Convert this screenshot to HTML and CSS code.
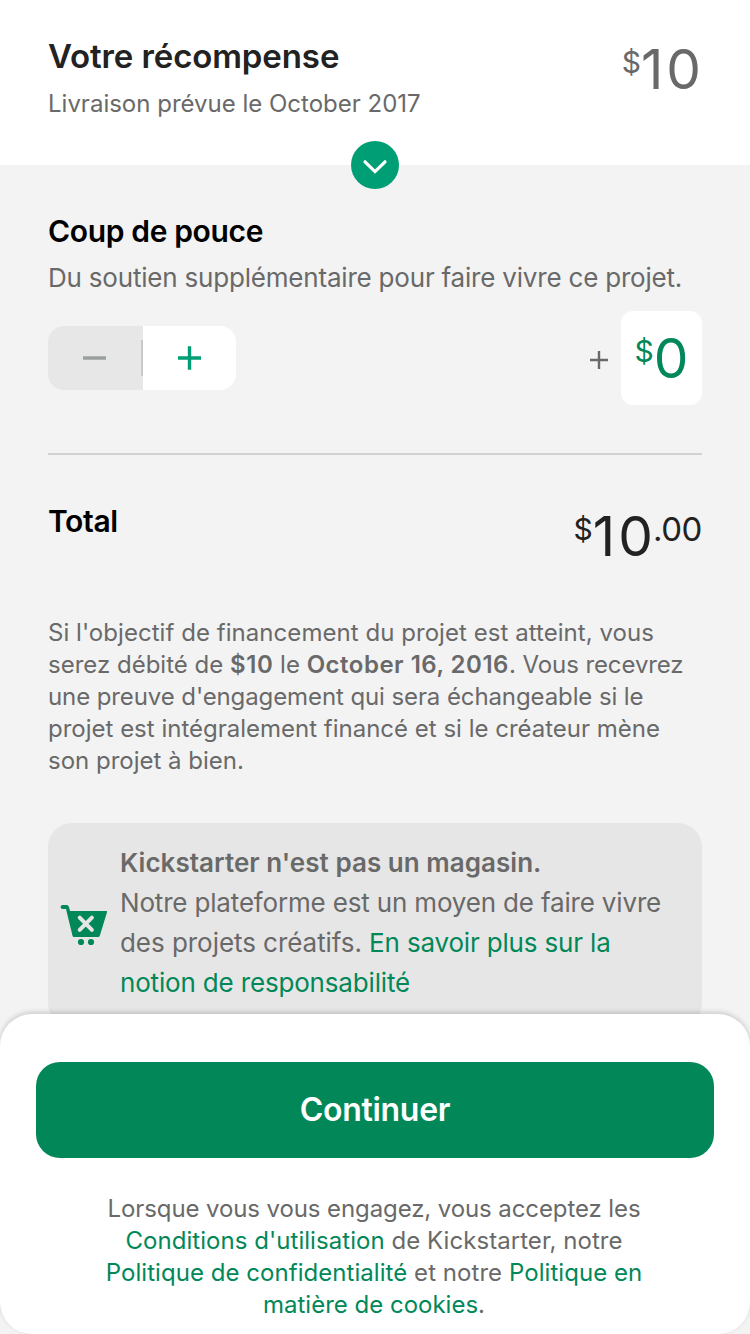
FILE: index.html
```html
<!DOCTYPE html>
<html lang="fr">
<head>
<meta charset="utf-8">
<title>Votre récompense</title>
<link rel="stylesheet" href="styles.css">
</head>
<body>
<div class="screen">
  <header class="reward">
    <div>
      <h1 class="reward-title">Votre récompense</h1>
      <p class="reward-date">Livraison prévue le October 2017</p>
    </div>
    <div class="money money-reward"><span class="currency">$</span><span class="amount"><span class="one">1</span>0</span></div>
    <button class="expand" aria-label="Détails"><svg width="48" height="48" viewBox="0 0 48 48"><path d="M14 20.8L24 30.6L34 20.8" fill="none" stroke="#fff" stroke-width="3.2" stroke-linecap="round"/></svg></button>
  </header>
  <main class="content">
    <h2 class="heading">Coup de pouce</h2>
    <p class="bonus-text">Du soutien supplémentaire pour faire vivre ce projet.</p>
    <div class="bonus-row">
      <div class="stepper">
        <span class="step step-minus"><svg width="24" height="24" viewBox="0 0 24 24"><path d="M0 12h23" stroke="#9ba09e" stroke-width="3.4"/></svg></span>
        <span class="divider"></span>
        <span class="step step-plus"><svg width="24" height="24" viewBox="0 0 24 24"><path d="M0 12h23M11.5 .2v23.6" stroke="#009e74" stroke-width="3.4"/></svg></span>
      </div>
      <div class="bonus-value">
        <svg class="plus" width="20" height="20" viewBox="0 0 20 20"><path d="M1 10h18M10 1v18" stroke="#696969" stroke-width="2.4"/></svg>
        <div class="bonus-box money"><span class="currency">$</span><span class="amount">0</span></div>
      </div>
    </div>
    <hr class="rule">
    <div class="total-row">
      <h2 class="heading">Total</h2>
      <div class="money money-total"><span class="currency">$</span><span class="amount"><span class="one">1</span>0</span><span class="cents">.00</span></div>
    </div>
    <p class="terms"><span class="fit-wide">Si l'objectif de financement du projet est atteint, vous</span><br>serez débité de <b class="pledge">$10</b> le <b class="due">October 16, 2016</b>. <span class="fit-tight">Vous recevrez</span><br><span class="fit-tight">une preuve d'engagement qui sera échangeable si le</span><br>projet est intégralement financé et si le créateur mène<br>son projet à bien.</p>
    <section class="notice">
      <svg class="cart" width="48" height="44" viewBox="0 0 48 44"><path d="M2.6 2H6.8Q8.4 2 8.9 3.8L10 8H46.4Q47.4 8 47 9.2L39.8 32.8Q39.4 34 38 34H13.8Q12.8 34 12.5 32.8L6 6H2.6A2 2 0 0 1 2.6 2Z" fill="#028858"/><path d="M19.7 14.7L31.9 26.9M31.9 14.7L19.7 26.9" stroke="#e6e6e6" stroke-width="4" stroke-linecap="round"/><circle cx="21" cy="39" r="3.1" fill="#028858"/><circle cx="31" cy="39" r="3.1" fill="#028858"/></svg>
      <p class="notice-text"><b>Kickstarter n'est pas un magasin.</b><br>Notre plateforme est un moyen de faire vivre<br><span class="projects">des projets créatifs.</span> <a>En savoir plus sur la<br>notion de responsabilité</a></p>
    </section>
  </main>
  <footer class="sheet">
    <button class="continue">Continuer</button>
    <p class="legal"><span class="fit-tight">Lorsque vous vous engagez, vous acceptez les</span><br><span class="fit-wide"><a>Conditions d'utilisation</a> de Kickstarter, notre</span><br><span class="fit-wide"><a>Politique de confidentialité</a> et notre <a>Politique en</a></span><br><a>matière de cookies</a>.</p>
  </footer>
</div>
</body>
</html>
```
FILE: styles.css
```css
* { box-sizing: border-box; }
body { margin: 0; font-family: Inter, "Liberation Sans", sans-serif; color: #696969; }
h1, h2, p { margin: 0; }
b { font-weight: 600; }
a { color: #028858; }
.screen { position: relative; height: 1334px; overflow: hidden; background: #f3f3f3; }
.reward { position: relative; height: 165px; padding: 36px 48px 0; display: flex; justify-content: space-between; background: #fff; }
.reward-title { font-size: 33px; line-height: 40px; font-weight: 600; letter-spacing: -.1px; color: #222; white-space: nowrap; }
.reward-date { margin-top: 12px; font-size: 24px; line-height: 32px; white-space: nowrap; }
.expand { position: absolute; left: 351px; top: 141px; width: 48px; height: 48px; padding: 0; border: 0; border-radius: 50%; background: #009e74; }
.expand svg { display: block; }
.content { padding: 48px 48px 0; }
.heading { font-size: 30px; line-height: 36px; font-weight: 600; letter-spacing: -.35px; color: #000; }
.bonus-text { margin-top: 12px; font-size: 26px; line-height: 34px; letter-spacing: -.2px; white-space: nowrap; }
.bonus-row { display: flex; justify-content: space-between; align-items: center; height: 94px; margin-top: 16px; }
.stepper { display: flex; align-items: center; width: 188px; height: 64px; border-radius: 16px; overflow: hidden; background: linear-gradient(90deg, #e7e7e7 95px, #fff 95px); }
.step { flex: 1; display: flex; align-items: center; justify-content: center; }
.divider { width: 2px; height: 36px; background: #c9c9c9; }
.bonus-value { display: flex; align-items: center; gap: 12px; }
.plus { margin-top: 4px; }
.bonus-box { width: 81px; height: 94px; padding-top: 14px; justify-content: center; border-radius: 12px; background: #fff; color: #028858; }
.money { display: flex; align-items: flex-start; }
.money-reward { margin-right: 1px; }
.currency { font-size: 30px; line-height: 52px; }
.amount { font-size: 55px; line-height: 67px; }
.one { letter-spacing: 3px; }
.cents { font-size: 33px; line-height: 53px; letter-spacing: -.4px; }
.rule { height: 2px; margin: 48px 0; border: 0; background: #d1d1d1; }
.total-row { display: flex; justify-content: space-between; height: 114px; }
.money-total { color: #222; }
.terms { font-size: 24px; line-height: 32px; white-space: nowrap; }
.fit-wide { letter-spacing: .05px; }
.fit-tight { letter-spacing: -.1px; }
.pledge { letter-spacing: .6px; }
.due { letter-spacing: .5px; }
.notice { display: flex; align-items: center; height: 204px; margin-top: 46px; padding: 0 12px; border-radius: 24px; background: #e6e6e6; }
.notice-text { margin: -4px 0 0 12px; font-size: 26px; line-height: 40px; letter-spacing: -.17px; white-space: nowrap; }
.notice-text b { letter-spacing: .04px; }
.projects { letter-spacing: -.05px; }
.sheet { position: absolute; left: 0; top: 1014px; width: 750px; height: 320px; padding: 48px 36px 0; border-radius: 32px; background: #fff; box-shadow: 0 -2px 5px rgba(0,0,0,.16); }
.continue { display: block; width: 100%; height: 96px; padding: 0 0 2px; border: 0; border-radius: 24px; background: #028858; color: #fff; font: 600 32px Inter, sans-serif; letter-spacing: -.3px; }
.legal { margin: 35px 2px 0 0; text-align: center; font-size: 24px; line-height: 32px; white-space: nowrap; }
```
